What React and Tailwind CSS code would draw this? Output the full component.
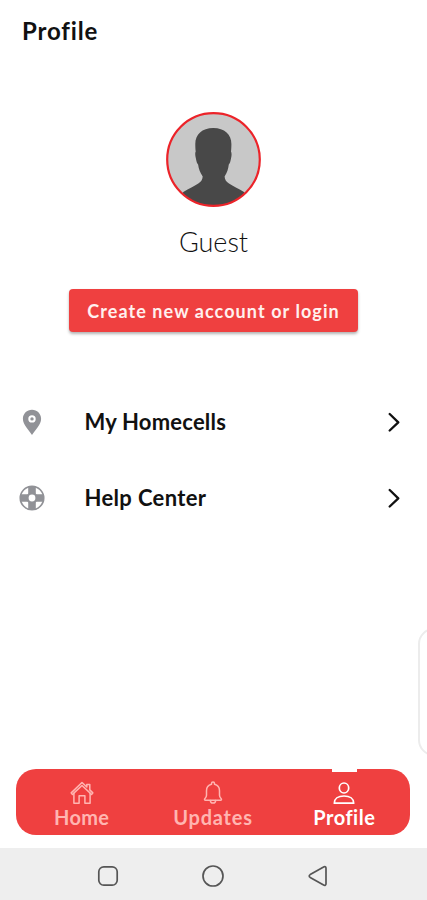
import React from "react";

const HomeIcon = () => (
  <svg width="24" height="24" viewBox="0 0 24 24" fill="none" stroke="currentColor" strokeWidth="1.5" strokeLinejoin="round" strokeLinecap="round">
    <path d="M1.2 11.900 12 1.500l4.800 4.500V3.500h3v5.400l3 3-1.300 1.500L12 4.500l-9.500 8.900z" />
    <path d="M3.900 12.500V22.300h5.200v-7.600h5.800v7.600h5.200V12.500" />
  </svg>
);

const BellIcon = () => (
  <svg width="24" height="24" viewBox="0 0 24 24" fill="none" stroke="currentColor" strokeWidth="1.5" strokeLinejoin="round" strokeLinecap="round">
    <path d="M10.500 3.200V2.600a1.500 1.500 0 0 1 3 0v.6c3.300.7 5 3.200 5 6.500v4.500c0 1.800.7 2.600 1.700 3.600.6.600.2 1.500-.6 1.500H4.400c-.8 0-1.200-.9-.6-1.500 1-1 1.700-1.800 1.700-3.600V9.700c0-3.300 1.700-5.800 5-6.500z" />
    <path d="M9.400 19.500a2.600 2.600 0 0 0 5.200 0" />
  </svg>
);

const UserIcon = () => (
  <svg width="24" height="24" viewBox="0 0 24 24" fill="none" stroke="currentColor" strokeWidth="1.7" strokeLinejoin="round">
    <ellipse cx="12" cy="7" rx="4.700" ry="5" />
    <path d="M2.300 22.200c0-4.300 3.800-7.200 9.700-7.200s9.700 2.900 9.700 7.200z" />
  </svg>
);

const PinIcon = () => (
  <svg width="20" height="27" viewBox="0 0 20 27">
    <path fill="#919297" fillRule="evenodd" d="M10 .8C4.900.8.900 4.700.9 9.700c0 6 5.600 10.800 9.100 16.300 3.500-5.500 9.100-10.300 9.100-16.300C19.100 4.700 15.100.8 10 .8zm0 5.400a3.700 3.700 0 1 1 0 7.400 3.700 3.700 0 0 1 0-7.400z" />
    <circle cx="10" cy="9.900" r="1.700" fill="#919297" />
  </svg>
);

const HelpIcon = () => (
  <svg width="26" height="26" viewBox="0 0 26 26" fill="none">
    <circle cx="13" cy="13" r="11.700" stroke="#919297" strokeWidth="1.700" />
    <path d="M13 1v24M1 13h24" stroke="#919297" strokeWidth="7.600" />
    <circle cx="13" cy="13" r="5.800" fill="#919297" />
    <circle cx="13" cy="13" r="3.400" fill="#fff" />
  </svg>
);

const Chevron = () => (
  <svg width="12" height="20" viewBox="0 0 12 20" fill="none" stroke="#111" strokeWidth="2.300" strokeLinecap="round" strokeLinejoin="round">
    <path d="M1.700 2 10.300 10.300l-8.600 8.200" />
  </svg>
);

const Avatar = () => (
  <svg width="95" height="95" viewBox="0 0 95 95">
    <defs>
      <clipPath id="avatar">
        <circle cx="47.500" cy="47.500" r="46.500" />
      </clipPath>
    </defs>
    <circle cx="47.500" cy="47.500" r="46.500" fill="#c8c8c8" />
    <path
      clipPath="url(#avatar)"
      fill="#484848"
      d="M47.300 16C36 16 29.300 22.500 29.300 32c0 3 .1 5.200.4 7.500-.8 1.500-.5 4 .1 6.500.6 3.500 1.200 5.500 2.300 6.500.6 4.500 2 8 4.600 12-.2 3-1.400 5-4.400 7-4.300 3-9 5-15 8.500L10 96h75l-7-16c-6-3.500-10.700-5.500-15-8.500-3-2-4.200-4-4.400-7 2.600-4 3.600-7.500 4.200-12 1.100-1 1.700-3 2.300-6.500.6-2.500.7-5-.1-6.500.3-2.300.4-4.500.4-7.500C65.400 22.500 58.600 16 47.300 16z"
    />
    <circle cx="47.500" cy="47.500" r="46.300" fill="none" stroke="#ec2329" strokeWidth="2.200" />
  </svg>
);

const menu = [
  { name: "My Homecells", icon: <PinIcon />, textClass: "tracking-[0.2px]" },
  { name: "Help Center", icon: <HelpIcon />, textClass: "tracking-[0.35px]" },
];

const tabs = [
  { name: "Home", icon: <HomeIcon />, textClass: "tracking-[0.3px]" },
  { name: "Updates", icon: <BellIcon />, textClass: "tracking-[0.8px]" },
  { name: "Profile", icon: <UserIcon />, textClass: "tracking-[0.5px]", active: true },
];

const App = () => {
  return (
    <div className="relative flex h-[900px] w-full flex-col overflow-hidden bg-white font-[Lato,sans-serif] text-[#111]">
      <header className="h-28 pl-[22px] pt-[15px]">
        <h1 className="text-2xl/8 font-bold tracking-[0.85px]">Profile</h1>
      </header>

      <section className="flex flex-col items-center">
        <Avatar />
        <p className="mt-[19px] text-[27px]/8 font-light">Guest</p>
        <button className="mt-[31px] h-[43px] w-[289px] whitespace-nowrap rounded bg-[#ef4040] text-lg font-bold tracking-[1.08px] text-[#fff0ee] shadow-[0_2px_3px_rgba(0,0,0,0.3)]">
          Create new account or login
        </button>
      </section>

      <ul className="mt-[52px]">
        {menu.map((item) => (
          <li key={item.name} className="flex h-[76px] items-center pl-[19px] pr-[27px]">
            <span className="flex w-[26px] justify-center">{item.icon}</span>
            <span className={`-mt-0.5 ml-[39.5px] flex-1 text-[22px] font-bold ${item.textClass}`}>{item.name}</span>
            <Chevron />
          </li>
        ))}
      </ul>

      {/* edge panel handle */}
      <div className="absolute left-[418px] top-[628px] h-[128px] w-8 rounded-2xl border-2 border-[#ececec] bg-white" />

      <nav className="mx-4 mb-[13px] mt-auto flex h-[66px] w-[394px] shrink-0 rounded-[20px] bg-[#ef4040]">
        {tabs.map((tab) => (
          <div key={tab.name} className={tab.active ? "relative flex flex-1 flex-col items-center pt-3 text-white" : "relative flex flex-1 flex-col items-center pt-3 text-[#ffb5b1]"}>
            {tab.active && <span className="absolute top-0 h-[3px] w-[25px] bg-white" />}
            {tab.icon}
            <span className={`text-xl/6 font-bold ${tab.textClass}`}>{tab.name}</span>
          </div>
        ))}
      </nav>

      <footer className="flex h-[52px] shrink-0 items-center justify-center gap-[81px] bg-[#eee] pr-px pt-[3px]">
        <svg width="24" height="24" viewBox="0 0 24 24" fill="none" stroke="#555" strokeWidth="1.700">
          <rect x="2.800" y="2.800" width="18.400" height="18.400" rx="5" />
        </svg>
        <svg width="24" height="24" viewBox="0 0 24 24" fill="none" stroke="#555" strokeWidth="1.700">
          <circle cx="12" cy="12" r="10" />
        </svg>
        <svg width="24" height="24" viewBox="0 0 24 24" fill="none" stroke="#555" strokeWidth="1.700" strokeLinejoin="round">
          <path d="M4.200 10.600 17.600 3c1.300-.7 2.400-.2 2.400 1.300v15.400c0 1.500-1.100 2-2.400 1.300L4.200 13.400c-1.300-.8-1.300-2 0-2.800z" />
        </svg>
      </footer>
    </div>
  );
};

export default App;
